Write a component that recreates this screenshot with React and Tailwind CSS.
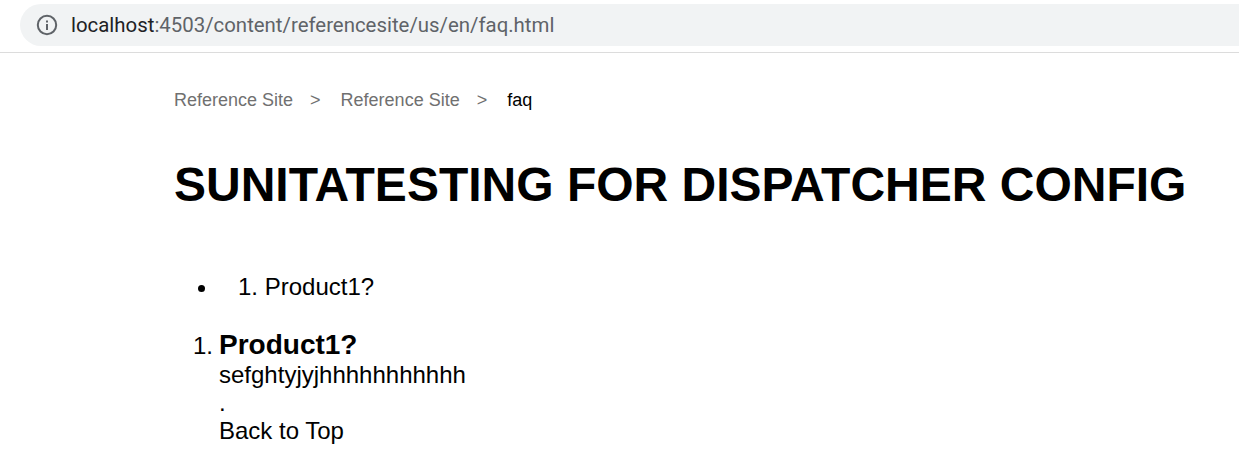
import React from 'react'

function InfoIcon() {
  return (
    <svg width="22" height="22" viewBox="0 0 22 22" fill="none" className="shrink-0">
      <circle cx="11" cy="11" r="9.2" stroke="#5f6368" strokeWidth="2" />
      <rect x="10" y="10" width="2" height="6" fill="#5f6368" />
      <rect x="10" y="6.5" width="2" height="2" fill="#5f6368" />
    </svg>
  )
}

export default function App() {
  return (
    <div className="h-[474px] w-[1239px] overflow-hidden bg-white font-['Liberation_Sans',Arial,sans-serif] text-black">
      {/* Address bar */}
      <div className="h-[53px] border-b border-[#dcdcdc] pt-1 pl-5">
        <div className="flex h-[42px] items-center gap-[13px] rounded-l-[21px] bg-[#f1f3f4] pl-[16px]">
          <InfoIcon />
          <div className="pt-[1px] font-['Roboto',sans-serif] text-[20.4px] text-[#5f6368]">
            <span className="text-[#202124]">localhost</span>:4503/content/referencesite/us/en/faq.html
          </div>
        </div>
      </div>

      <div className="pl-[174px]">
        {/* Breadcrumb */}
        <div className="mt-[37px] flex h-[20px] items-center text-[18px] text-[#707070]">
          <span>Reference Site</span>
          <span className="mr-[20px] ml-[17px]">&gt;</span>
          <span>Reference Site</span>
          <span className="mr-[20px] ml-[17px]">&gt;</span>
          <span className="text-black">faq</span>
        </div>

        <h1 className="mt-[46px] text-[48px] leading-[58px] font-bold whitespace-nowrap">SUNITATESTING FOR DISPATCHER CONFIG</h1>

        {/* Question list */}
        <ul className="mt-[59px] flex h-[28px] items-center text-[24px] leading-[28px]">
          <li className="flex items-center">
            <span className="mt-[2px] ml-[24px] h-[7px] w-[7px] rounded-full bg-black" />
            <span className="ml-[33px]">1. Product1?</span>
          </li>
        </ul>

        {/* Answers */}
        <ol className="mt-[28px] flex text-[24px] leading-[28px]">
          <li className="flex">
            <span className="ml-[19px] w-[26px] pt-[3px]">1.</span>
            <div>
              <h2 className="text-[28px] leading-[32px] font-bold">Product1?</h2>
              <p>sefghtyjyjhhhhhhhhhhh</p>
              <p>.</p>
              <p>Back to Top</p>
            </div>
          </li>
        </ol>
      </div>
    </div>
  )
}
